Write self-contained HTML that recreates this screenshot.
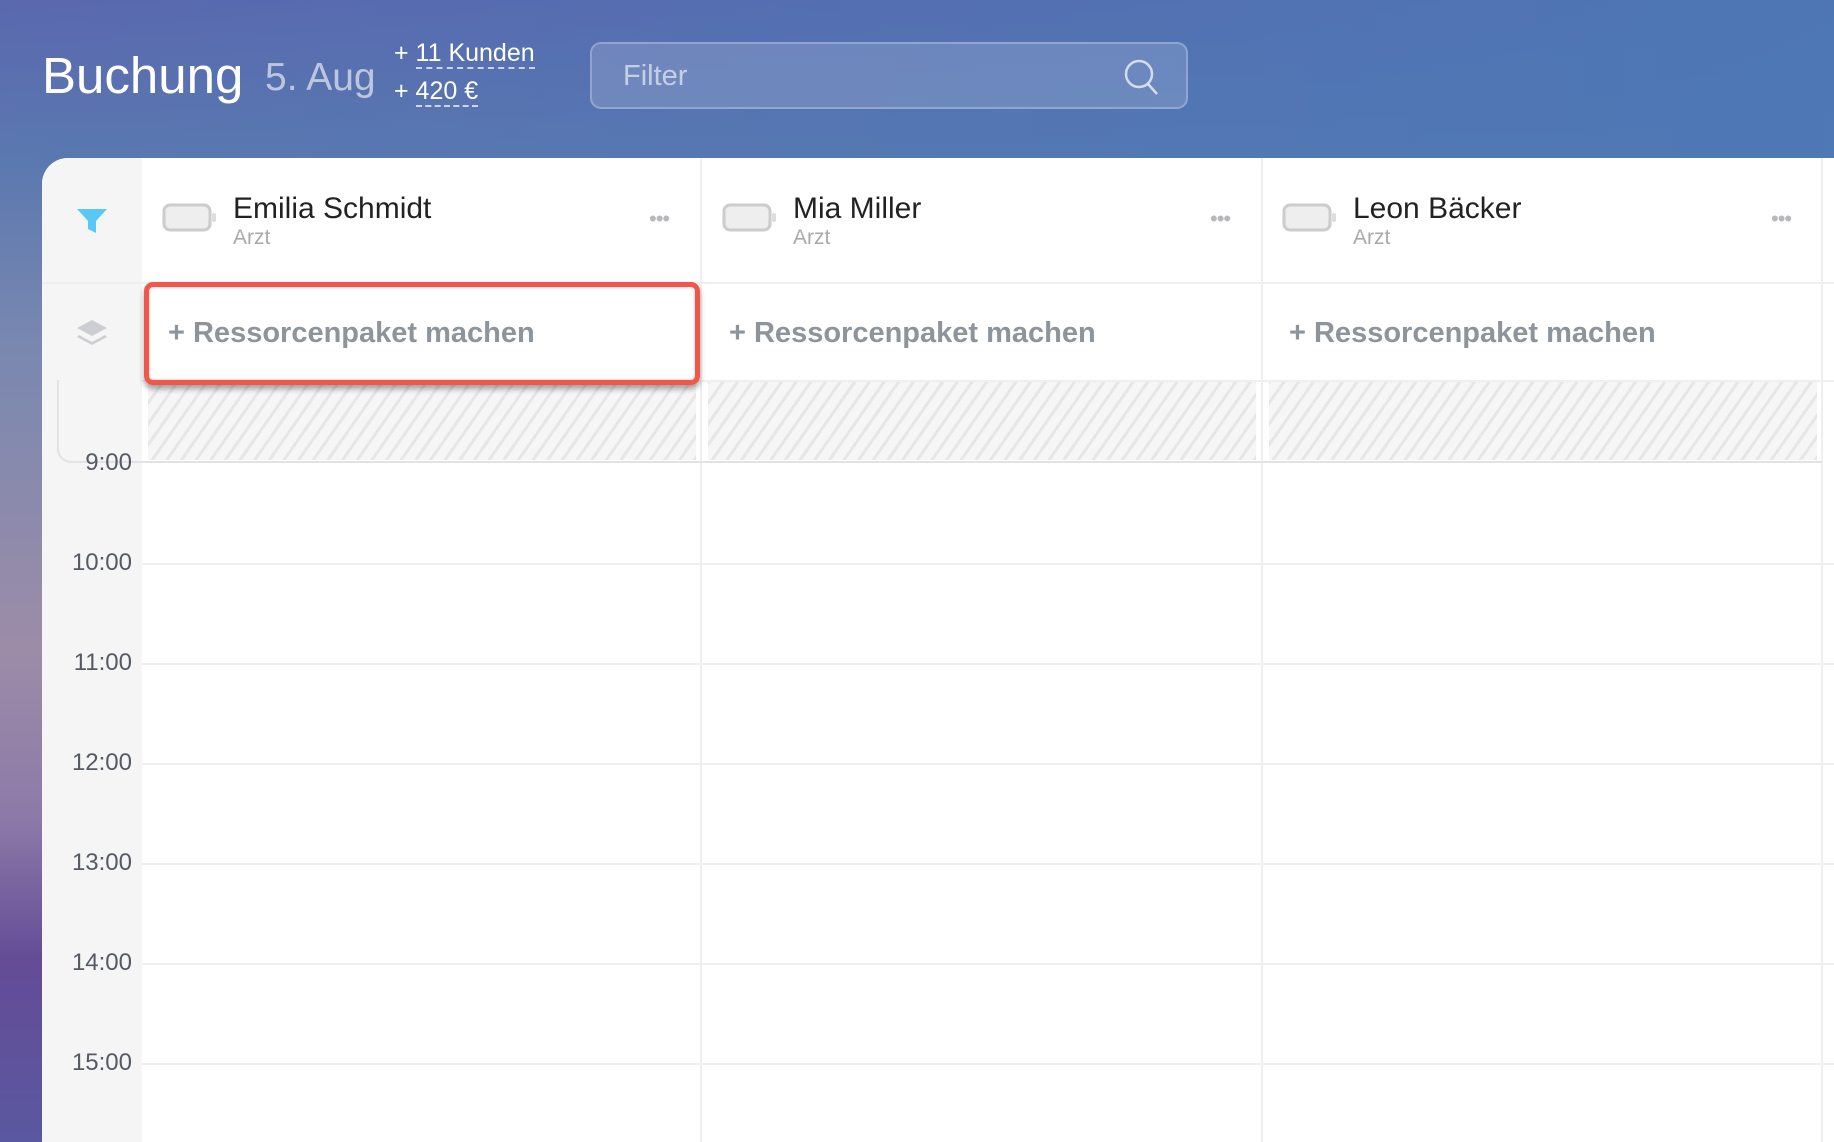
<!DOCTYPE html>
<html><head><meta charset="utf-8"><style>
*{margin:0;padding:0;box-sizing:border-box}
html{overflow:hidden;width:1834px;height:1142px}
body{width:1834px;height:1142px;overflow:hidden;position:relative;font-family:"Liberation Sans",sans-serif;
background:linear-gradient(180deg,#5a68ae 0px,#5b78b0 160px,#7a88b0 350px,#9c8ca8 650px,#8d79a8 820px,#644c96 960px,#5a58a0 1142px);}
.topr{position:absolute;left:0;top:0;width:1834px;height:160px;background:linear-gradient(90deg,rgba(90,100,172,.0),rgba(76,120,182,.9));}
.t{position:absolute;white-space:nowrap}
.card{position:absolute;left:42px;top:158px;width:1792px;height:984px;background:#fff;border-radius:26px 0 0 0;overflow:hidden}
.lcol{position:absolute;left:0;top:0;width:100px;height:984px;background:#f5f5f6}
.vl{position:absolute;top:0;width:2px;height:984px;background:#efeff1}
.hl{position:absolute;height:2px;background:#eeeff1}
.name{font-size:30px;color:#222}
.sub{font-size:21px;color:#aaa}
.add{font-size:29px;font-weight:bold;color:#8e949b}
.hatch{position:absolute;top:224px;height:78px;background:repeating-linear-gradient(-55deg,#e6e6e8 0 3px,#f6f6f7 3px 12px)}
.time{position:absolute;font-size:24px;color:#555a63;text-align:right}
.dots{position:absolute;font-size:22px;color:#b8b8bc;letter-spacing:-1px}
</style></head><body>
<div class="topr"></div>
<div class="t" style="left:42px;top:46px;font-size:51px;color:#fff">Buchung</div>
<div class="t" style="left:265px;top:56px;font-size:39px;color:rgba(255,255,255,.6)">5. Aug</div>
<div class="t" style="left:394px;top:39px;font-size:25px;color:#fff">+ <span style="border-bottom:2px dashed rgba(255,255,255,.7)">11 Kunden</span></div>
<div class="t" style="left:394px;top:77px;font-size:25px;color:#fff">+ <span style="border-bottom:2px dashed rgba(255,255,255,.7)">420 €</span></div>
<div style="position:absolute;left:590px;top:42px;width:598px;height:67px;border:2px solid rgba(255,255,255,.25);background:rgba(255,255,255,.15);border-radius:11px"></div>
<div class="t" style="left:623px;top:60px;font-size:29px;color:rgba(255,255,255,.6)">Filter</div>
<svg style="position:absolute;left:1122px;top:58px" width="40" height="38"><circle cx="17" cy="16" r="13" fill="none" stroke="rgba(255,255,255,.7)" stroke-width="2.5"/><path d="M26 26l9 10" stroke="rgba(255,255,255,.7)" stroke-width="2.5"/></svg>
<div class="card">
<div class="lcol"></div>
<svg style="position:absolute;left:34px;top:49px" width="32" height="28"><path d="M1 2h30l-11 12v12l-8-4v-8z" fill="#5ac8f5"/></svg>
<svg style="position:absolute;left:33px;top:160px" width="34" height="30"><path d="M17 2l15 8-15 8-15-8z" fill="#ccced2"/><path d="M4 17l13 7 13-7 2 2-15 8-15-8z" fill="#ccced2"/></svg>
<div style="position:absolute;left:15px;top:222px;width:85px;height:83px;border:2px solid #e2e2e4;border-top:none;border-right:none;border-radius:0 0 0 14px"></div>
<div class="vl" style="left:658px"></div><div class="vl" style="left:1219px"></div><div class="vl" style="left:1779px"></div>
<div class="hl" style="left:0;top:124px;width:1800px"></div>
<div class="hl" style="left:100px;top:222px;width:1800px"></div>
<div class="hatch" style="left:106px;width:548px"></div>
<div class="hatch" style="left:666px;width:548px"></div>
<div class="hatch" style="left:1227px;width:548px"></div>
<div class="hl" style="left:100px;top:303px;width:1680px;background:#e2e2e4"></div>
<div class="hl" style="left:100px;top:405px;width:1800px"></div>
<div class="hl" style="left:100px;top:505px;width:1800px"></div>
<div class="hl" style="left:100px;top:605px;width:1800px"></div>
<div class="hl" style="left:100px;top:705px;width:1800px"></div>
<div class="hl" style="left:100px;top:805px;width:1800px"></div>
<div class="hl" style="left:100px;top:905px;width:1800px"></div>
<div class="time" style="top:291px;left:0;width:90px">9:00</div>
<div class="time" style="top:391px;left:0;width:90px">10:00</div>
<div class="time" style="top:491px;left:0;width:90px">11:00</div>
<div class="time" style="top:591px;left:0;width:90px">12:00</div>
<div class="time" style="top:691px;left:0;width:90px">13:00</div>
<div class="time" style="top:791px;left:0;width:90px">14:00</div>
<div class="time" style="top:891px;left:0;width:90px">15:00</div>
<svg style="position:absolute;left:120px;top:45px" width="56" height="30"><rect x="2" y="2" width="46" height="25" rx="6" fill="#eee" stroke="#ccc" stroke-width="3"/><rect x="50" y="10" width="4" height="9" rx="2" fill="#ddd"/></svg>
<svg style="position:absolute;left:680px;top:45px" width="56" height="30"><rect x="2" y="2" width="46" height="25" rx="6" fill="#eee" stroke="#ccc" stroke-width="3"/><rect x="50" y="10" width="4" height="9" rx="2" fill="#ddd"/></svg>
<svg style="position:absolute;left:1240px;top:45px" width="56" height="30"><rect x="2" y="2" width="46" height="25" rx="6" fill="#eee" stroke="#ccc" stroke-width="3"/><rect x="50" y="10" width="4" height="9" rx="2" fill="#ddd"/></svg>
<div class="t name" style="left:191px;top:34px">Emilia Schmidt</div>
<div class="t sub" style="left:191px;top:68px">Arzt</div>
<div class="t name" style="left:751px;top:34px">Mia Miller</div>
<div class="t sub" style="left:751px;top:68px">Arzt</div>
<div class="t name" style="left:1311px;top:34px">Leon Bäcker</div>
<div class="t sub" style="left:1311px;top:68px">Arzt</div>
<div class="dots" style="left:607px;top:48px">•••</div>
<div class="dots" style="left:1168px;top:48px">•••</div>
<div class="dots" style="left:1729px;top:48px">•••</div>
<div class="t add" style="left:126px;top:159px">+ Ressorcenpaket machen</div>
<div class="t add" style="left:687px;top:159px">+ Ressorcenpaket machen</div>
<div class="t add" style="left:1247px;top:159px">+ Ressorcenpaket machen</div>
<div style="position:absolute;left:102px;top:124px;width:556px;height:103px;border:5px solid #f2564b;border-radius:9px;box-shadow:0 4px 6px rgba(0,0,0,.35), inset 0 0 3px rgba(0,0,0,.25)"></div>
</div>
</body></html>
